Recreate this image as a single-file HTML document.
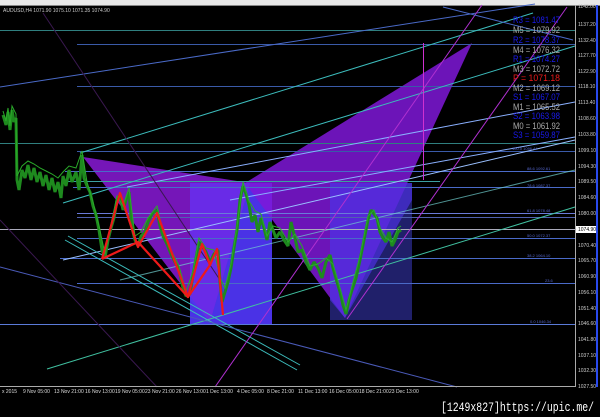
<!DOCTYPE html>
<html><head><meta charset="utf-8"><style>
html,body{margin:0;padding:0;background:#000;width:600px;height:417px;overflow:hidden}
svg{display:block}
.ax{font:5px "Liberation Sans",sans-serif;fill:#ccc}
.tm{font:5px "Liberation Sans",sans-serif;fill:#ddd}
.pv{font:9.5px "Liberation Sans",sans-serif}
.fb{font:4px "Liberation Sans",sans-serif;fill:#5566cc}
</style></head><body>
<svg width="600" height="417" viewBox="0 0 600 417" xmlns="http://www.w3.org/2000/svg">
<rect width="600" height="417" fill="#000"/>
<rect x="0" y="0" width="600" height="5" fill="#e8e8e8"/>
<rect x="0" y="5" width="600" height="1" fill="#888"/>
<text x="3" y="12" class="ax" fill="#ddd">AUDUSD,H4  1071.90  1075.10  1071.35  1074.90</text>

<rect x="190" y="183" width="82" height="142" fill="#4a32e6"/>
<rect x="272" y="183" width="58" height="140" fill="#000"/>
<rect x="330" y="183" width="82" height="137" fill="#20206a"/>
<polygon points="83,157 250,183 210,322" fill="#8a1ad8" opacity="0.85"/>
<polygon points="245,183 472,43 345,318" fill="#7f18d8" opacity="0.85"/>
<polygon points="190,183 250,183 210,322 190,300" fill="#5a36ee" opacity="0.6"/>
<polygon points="330,183 412,183 412,200 345,318 330,300" fill="#4b30e0" opacity="0.7"/>

<g stroke-width="1">
<line x1="0" y1="30.5" x2="575" y2="30.5" stroke="#2f7f7f"/>
<line x1="77" y1="44.5" x2="575" y2="44.5" stroke="#3a5aa8"/>
<line x1="77" y1="86.5" x2="575" y2="86.5" stroke="#3a5aa8"/>
<line x1="0" y1="143.5" x2="575" y2="143.5" stroke="#2f7f7f"/>
<line x1="77" y1="151.5" x2="575" y2="151.5" stroke="#3a5aa8"/>
<line x1="65" y1="171.5" x2="575" y2="171.5" stroke="#4a6ac8"/>
<line x1="65" y1="181.5" x2="440" y2="181.5" stroke="#3aa0a0"/>
<line x1="73" y1="187.5" x2="575" y2="187.5" stroke="#4a6ac8"/>
<line x1="77" y1="213.5" x2="575" y2="213.5" stroke="#6a7ad8"/>
<line x1="77" y1="217.5" x2="575" y2="217.5" stroke="#5060b0"/>
<line x1="0" y1="229.5" x2="575" y2="229.5" stroke="#aab"/>
<line x1="77" y1="238.5" x2="575" y2="238.5" stroke="#4a6ac8"/>
<line x1="60" y1="258.5" x2="575" y2="258.5" stroke="#4a6ac8"/>
<line x1="77" y1="283.5" x2="575" y2="283.5" stroke="#4a6ac8"/>
<line x1="0" y1="324.5" x2="575" y2="324.5" stroke="#5a7ad8"/>
</g>

<g stroke-width="1" fill="none">
<line x1="0" y1="87" x2="535" y2="4" stroke="#4a6ac8"/>
<line x1="80" y1="153" x2="533" y2="13" stroke="#3cbcbc"/>
<line x1="63" y1="203" x2="575" y2="46" stroke="#3cbcbc"/>
<line x1="127" y1="187" x2="575" y2="102" stroke="#8ab0ff"/>
<line x1="230" y1="200" x2="575" y2="137" stroke="#8ab0ff"/>
<line x1="63" y1="260" x2="575" y2="140" stroke="#9ac0ff"/>
<line x1="47" y1="369" x2="575" y2="207" stroke="#40c0a0"/>
<line x1="120" y1="280" x2="575" y2="170" stroke="#70d0d0" opacity="0.7"/>
<line x1="65" y1="240" x2="297" y2="370" stroke="#3cbcbc"/>
<line x1="68" y1="236" x2="300" y2="365" stroke="#3cbcbc"/>
<line x1="0" y1="267" x2="457" y2="387" stroke="#4a5ab8"/>
<line x1="215" y1="387" x2="482" y2="5" stroke="#b030d0"/>
<line x1="347" y1="319" x2="567" y2="7" stroke="#b030d0"/>
<line x1="443" y1="7" x2="573" y2="40" stroke="#4a6ac8"/>
<line x1="43" y1="13" x2="220" y2="280" stroke="#3a1850"/>
<line x1="0" y1="220" x2="157" y2="387" stroke="#3a1850"/>
<line x1="423.5" y1="43" x2="423.5" y2="180" stroke="#d030d0"/>
</g>

<g fill="none" stroke="#1e8a1e" stroke-width="3" stroke-linejoin="bevel">
<polyline points="3,115 6,125 8,112 10,130 12,110 14,122 16,118 17,180 19,190 22,170 25,178 28,165 31,180 34,168 37,182 40,172 43,186 46,175 49,190 52,178 55,192 58,182 61,198 63,176 66,186 69,170 72,182 76,172 79,190 82,155 84,178 87,186 90,192 93,206 96,215 99,230 102,250 105,258 108,240 111,228 114,218 117,200 120,195 123,210 126,200 129,192 132,228 135,240 138,246 141,236 145,232 148,222 152,214 157,210 160,226 163,236 167,244 171,254 175,262 179,270 183,288 186,296 190,294 193,275 196,258 199,242 202,246 206,252 210,262 214,254 218,250 220,282 222,302 225,292 228,282 231,268 234,248 237,230 240,200 243,186 246,194 249,205 252,222 255,215 258,232 261,218 264,228 267,240 270,222 273,230 276,238 280,232 284,240 288,246 291,222 295,238 298,252 302,250 306,262 310,270 314,262 318,268 322,278 326,262 330,255 333,268 337,282 340,292 343,305 346,314 349,300 352,290 356,278 360,260 364,240 368,220 371,210 374,214 377,218 380,232 383,238 386,242 389,232 392,246 395,240 398,232 401,230"/>
</g>
<g fill="none" stroke="#2aaa2a" stroke-width="1" transform="translate(0,-4)">
<polyline points="3,115 6,125 8,112 10,130 12,110 16,118 17,180 22,170 28,165 34,168 40,172 46,175 52,178 58,182 63,176 69,170 76,172 82,155 87,186 93,206 99,230 105,258 111,228 117,200 123,210 129,192 135,240 141,236 148,222 157,210 163,236 171,254 179,270 186,296 193,275 199,242 206,252 214,254 220,282 225,292 231,268 237,230 243,186 249,205 255,215 261,218 267,240 273,230 280,232 288,246 295,238 302,250 310,270 318,268 326,262 333,268 340,292 346,314 352,290 360,260 368,220 374,214 380,232 386,242 392,246 398,232 401,230"/>
</g>

<g fill="none" stroke="#ee1a1a" stroke-width="2.2" stroke-linejoin="round">
<polyline points="102,259 120,193 138,247 157,213 188,297 202,244 210,265 217,249 223,315"/>
<polyline points="102,259 138,242 188,297 210,265 202,244"/>
</g>

<text x="512" y="150" class="fb">100.0  1096.44</text>
<text x="527" y="170" class="fb">88.6  1092.61</text>
<text x="527" y="187" class="fb">78.6  1087.37</text>
<text x="527" y="212" class="fb">61.8  1078.48</text>
<text x="527" y="237" class="fb">50.0  1072.37</text>
<text x="527" y="257" class="fb">38.2  1064.10</text>
<text x="545" y="282" class="fb">23.6</text>
<text x="530" y="323" class="fb">0.0  1046.34</text>

<g class="pv">
<text x="513" y="23" fill="#1a1aee" textLength="47" lengthAdjust="spacingAndGlyphs">R3 = 1081.47</text>
<text x="513" y="33" fill="#aaa" textLength="47" lengthAdjust="spacingAndGlyphs">M5 = 1079.92</text>
<text x="513" y="43" fill="#1a1aee" textLength="47" lengthAdjust="spacingAndGlyphs">R2 = 1078.37</text>
<text x="513" y="53" fill="#aaa" textLength="47" lengthAdjust="spacingAndGlyphs">M4 = 1076.32</text>
<text x="513" y="62" fill="#1a1aee" textLength="47" lengthAdjust="spacingAndGlyphs">R1 = 1074.27</text>
<text x="513" y="72" fill="#aaa" textLength="47" lengthAdjust="spacingAndGlyphs">M3 = 1072.72</text>
<text x="513" y="81" fill="#ee1a1a" textLength="47" lengthAdjust="spacingAndGlyphs">P  = 1071.18</text>
<text x="513" y="91" fill="#aaa" textLength="47" lengthAdjust="spacingAndGlyphs">M2 = 1069.12</text>
<text x="513" y="100" fill="#1a1aee" textLength="47" lengthAdjust="spacingAndGlyphs">S1 = 1067.07</text>
<text x="513" y="110" fill="#aaa" textLength="47" lengthAdjust="spacingAndGlyphs">M1 = 1065.52</text>
<text x="513" y="119" fill="#1a1aee" textLength="47" lengthAdjust="spacingAndGlyphs">S2 = 1063.98</text>
<text x="513" y="129" fill="#aaa" textLength="47" lengthAdjust="spacingAndGlyphs">M0 = 1061.92</text>
<text x="513" y="138" fill="#1a1aee" textLength="47" lengthAdjust="spacingAndGlyphs">S3 = 1059.87</text>
</g>

<line x1="575.5" y1="5" x2="575.5" y2="387" stroke="#aaa"/>
<line x1="0" y1="386.5" x2="575" y2="386.5" stroke="#aaa"/>
<rect x="596" y="5" width="2" height="382" fill="#2a4aee"/>
<g class="ax">
<text x="578" y="8">1142.00</text><text x="578" y="26">1137.20</text><text x="578" y="42">1132.40</text>
<text x="578" y="57">1127.70</text><text x="578" y="73">1122.90</text><text x="578" y="88">1118.10</text>
<text x="578" y="104">1113.40</text><text x="578" y="120">1108.60</text><text x="578" y="136">1103.80</text>
<text x="578" y="152">1099.10</text><text x="578" y="168">1094.30</text><text x="578" y="183">1089.50</text>
<text x="578" y="199">1084.60</text><text x="578" y="215">1080.00</text>
<text x="578" y="247">1070.40</text><text x="578" y="262">1065.70</text><text x="578" y="278">1060.90</text>
<text x="578" y="294">1056.10</text><text x="578" y="310">1051.40</text><text x="578" y="325">1046.60</text>
<text x="578" y="341">1041.80</text><text x="578" y="357">1037.10</text><text x="578" y="372">1032.30</text>
<text x="578" y="388">1027.50</text>
</g>
<rect x="576" y="226" width="20" height="7" fill="#fff"/>
<text x="578" y="231" class="ax" style="fill:#000">1074.90</text>
<g class="tm">
<text x="2" y="393">x 2015</text><text x="23" y="393">9 Nov 05:00</text><text x="54" y="393">13 Nov 21:00</text>
<text x="85" y="393">16 Nov 13:00</text><text x="115" y="393">19 Nov 05:00</text><text x="145" y="393">23 Nov 21:00</text>
<text x="176" y="393">26 Nov 13:00</text><text x="206" y="393">1 Dec 13:00</text><text x="237" y="393">4 Dec 05:00</text>
<text x="267" y="393">8 Dec 21:00</text><text x="298" y="393">11 Dec 13:00</text><text x="329" y="393">16 Dec 05:00</text>
<text x="359" y="393">18 Dec 21:00</text><text x="389" y="393">23 Dec 13:00</text>
</g>
<text x="441" y="411" font-family="Liberation Mono, monospace" font-size="13" fill="#fff" textLength="153" lengthAdjust="spacingAndGlyphs">[1249x827]https://upic.me/</text>
</svg>
</body></html>
